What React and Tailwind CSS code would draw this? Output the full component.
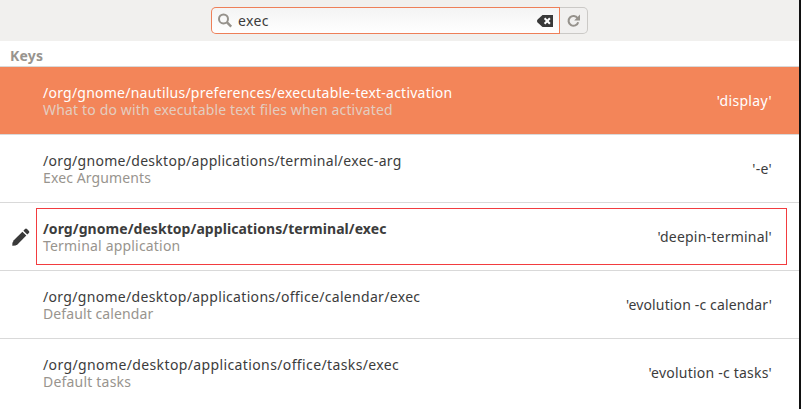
const rows = [
  { path: '/org/gnome/nautilus/preferences/executable-text-activation', note: 'What to do with executable text files when activated', value: "'display'", selected: true, pathTrack: 'tracking-[0.24px]', noteTrack: 'tracking-[0.16px]', valueTrack: 'tracking-[0.33px]' },
  { path: '/org/gnome/desktop/applications/terminal/exec-arg', note: 'Exec Arguments', value: "'-e'", pathTrack: 'tracking-[0.29px]', noteTrack: 'tracking-[0.12px]', valueTrack: 'tracking-[0.3px]' },
  { path: '/org/gnome/desktop/applications/terminal/exec', note: 'Terminal application', value: "'deepin-terminal'", edited: true, pathTrack: 'tracking-[0.06px]', noteTrack: 'tracking-[0.19px]', valueTrack: 'tracking-[0.22px]' },
  { path: '/org/gnome/desktop/applications/office/calendar/exec', note: 'Default calendar', value: "'evolution -c calendar'", pathTrack: 'tracking-[0.32px]', noteTrack: 'tracking-[0.1px]', valueTrack: 'tracking-[0.14px]' },
  { path: '/org/gnome/desktop/applications/office/tasks/exec', note: 'Default tasks', value: "'evolution -c tasks'", last: true, pathTrack: 'tracking-[0.38px]', noteTrack: 'tracking-[0.2px]', valueTrack: 'tracking-[0.22px]' },
];

function SearchIcon() {
  return (
    <svg className="h-4 w-4 shrink-0" viewBox="0 0 16 16" fill="none" stroke="#96928c">
      <circle cx="6.5" cy="5.9" r="4.5" strokeWidth="2" />
      <path d="M9.8 9.2 L14.2 13.6" strokeWidth="2.4" />
    </svg>
  );
}

function ClearIcon() {
  return (
    <svg className="h-3 w-4 shrink-0" viewBox="0 0 16 12">
      <path d="M5.5 0H16V12H5.5L0.6 7.4Q0 6.6 0 6T0.6 4.6Z" fill="#393939" />
      <path d="M7.6 3.2L12.9 8.8M12.9 3.2L7.6 8.8" stroke="#fff" strokeWidth="2" fill="none" />
    </svg>
  );
}

function RefreshIcon() {
  return (
    <svg className="h-4 w-4 shrink-0" viewBox="0 0 16 16" fill="none">
      <path d="M11.6 5.2A4.9 4.9 0 1 0 12.2 9.2" stroke="#96928c" strokeWidth="2.1" />
      <path d="M14 1.4V7.4H8.2Z" fill="#96928c" />
    </svg>
  );
}

function PencilIcon() {
  return (
    <svg className="h-[18px] w-[18px]" viewBox="0 0 18 18" fill="#3a3a3a">
      <path d="M0.3 17.7Q.2 14.2 1.8 12.3L10.4 3.7L14.3 7.6L5.7 16.2Q3.8 17.8 .3 17.7Z" />
      <path d="M11.4 2.7L13 1.1Q14 .1 15 1.1L16.9 3Q17.9 4 16.9 5L15.3 6.6Z" />
    </svg>
  );
}

function Row({ row }) {
  return (
    <div className={`flex h-[68px] shrink-0 items-center border-b pr-[27px] ${row.last ? 'border-white' : 'border-[#d9d9d9]'} ${row.selected ? 'bg-[#f38559] text-white' : 'bg-white text-[#3c3c3c]'}`}>
      <div className="flex w-[43px] shrink-0 pl-3">{row.edited && <PencilIcon />}</div>
      <div className="flex-1 pt-px leading-[17px] whitespace-nowrap">
        <div className={row.edited ? 'font-bold' : ''}><span className={row.pathTrack}>{row.path}</span></div>
        <div className={row.selected ? 'text-[#e3cdc0]' : 'text-[#98948e]'}><span className={row.noteTrack}>{row.note}</span></div>
      </div>
      <div className={`whitespace-nowrap ${row.valueTrack}`}>{row.value}</div>
    </div>
  );
}

export default function App() {
  return (
    <div className="relative flex h-[409px] w-[801px] flex-col overflow-hidden border-r-2 border-[#111] bg-white font-['Noto_Sans',sans-serif] text-[14px]">
      <header className="flex h-[41px] shrink-0 pt-[7px] pl-[211px] bg-[#f1f0ee]">
        <div className="h-[27px] w-[349px] rounded-l-[5px] bg-[#ee7f58] p-px">
          <div className="flex h-full items-center rounded-l-[4px] bg-linear-to-b from-[#f4f4f4] to-white pr-[6px] pl-[5px] text-[#3c3c3c]">
            <SearchIcon />
            <span className="ml-[5px] flex-1 leading-[17px] tracking-[0.4px]">exec</span>
            <ClearIcon />
          </div>
        </div>
        <div className="flex h-[27px] w-7 items-center justify-center rounded-r-[5px] border border-l-0 border-[#cbc9c6] bg-[#f1f0ef]">
          <RefreshIcon />
        </div>
      </header>
      <div className="h-[26px] shrink-0 border-b border-[#d9d9d9] pt-[6px] pl-[10px] leading-[17px] font-bold tracking-[0.2px] text-[#98948e]">Keys</div>
      <main className="flex flex-col">
        {rows.map((row) => <Row key={row.path} row={row} />)}
      </main>
      <div className="pointer-events-none absolute top-[208px] left-9 h-[57px] w-[751px] border border-[#f23c3f]" />
    </div>
  );
}
